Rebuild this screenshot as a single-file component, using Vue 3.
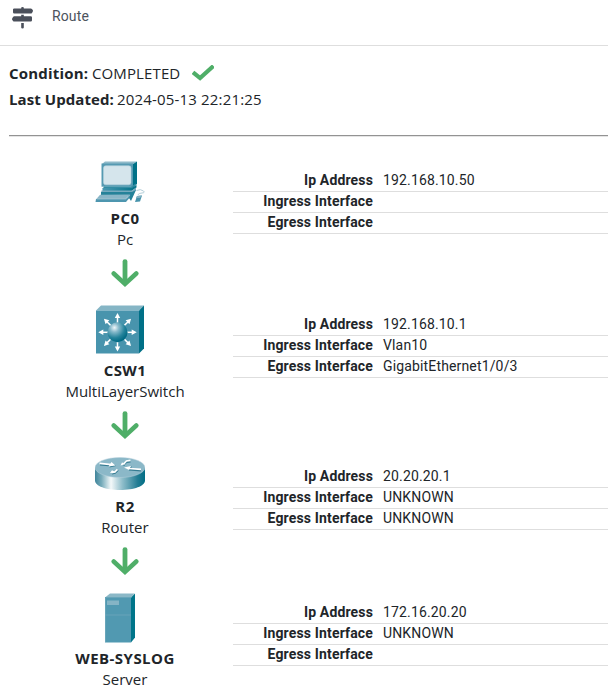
<script setup>
const hops = [
  { kind: 'pc', name: 'PC0', type: 'Pc', ip: '192.168.10.50', ingress: '', egress: '' },
  { kind: 'switch', name: 'CSW1', type: 'MultiLayerSwitch', ip: '192.168.10.1', ingress: 'Vlan10', egress: 'GigabitEthernet1/0/3' },
  { kind: 'router', name: 'R2', type: 'Router', ip: '20.20.20.1', ingress: 'UNKNOWN', egress: 'UNKNOWN' },
  { kind: 'server', name: 'WEB-SYSLOG', type: 'Server', ip: '172.16.20.20', ingress: 'UNKNOWN', egress: '' },
]
const angles = [0, 45, 90, 135, 180, 225, 270, 315]
</script>

<template>
  <main class="page">
    <header class="header">
      <svg class="sign" width="22" height="22" viewBox="0 0 22 22" fill="#4a4f5a">
        <path d="M9.200.8Q9.200 0 10.500 0t1.300.8v.6h6.900q.8 0 1.300.6l.8 1.200q.4.700 0 1.200L20 5.900q-.5.600-1.300.6H2.200Q1 6.500 1 5.300V2.600q0-1.200 1.200-1.200h7zM9.200 7.800h2.600v1.500h6.900q1.300 0 1.300 1.300v2.700q0 1.300-1.300 1.300H2.300q-.8 0-1.300-.6l-.8-1.200q-.4-.7 0-1.200L1 9.900q.5-.6 1.300-.6h6.900zM9.200 16h2.600v4.500q0 .9-1.300.9t-1.300-.9z" />
      </svg>
      <span class="title">Route</span>
    </header>
    <section class="summary">
      <div class="line">
        <b class="condition">Condition:</b><span class="status">COMPLETED</span>
        <svg class="check" width="22" height="17" viewBox="0 0 22 17"><path d="M2.600 8.600 8.100 13.100 19.900 2.400" fill="none" stroke="#4fae68" stroke-width="4.200" stroke-linecap="square" /></svg>
      </div>
      <div class="line"><b class="updated">Last Updated:</b><span class="date">2024-05-13 22:21:25</span></div>
    </section>
    <hr class="rule">
    <section class="route">
      <article v-for="(hop, i) in hops" :key="hop.name" class="hop">
        <div class="node">
          <svg v-if="hop.kind === 'pc'" class="device" width="50" height="42" viewBox="0 0 50 42">
            <defs><linearGradient id="pcSide"><stop stop-color="#4b98b1" /><stop offset="1" stop-color="#007187" /></linearGradient></defs>
            <path d="M7 3 10 .500h32L38 3z" fill="#8fbac9" />
            <path d="m38 3 4-2.500V23l-4.500 4z" fill="#007187" />
            <path d="M6.500 2.500H38v23.200H6.500z" fill="#569ab2" />
            <rect x="8.500" y="4.800" width="27.500" height="19" rx="2.200" fill="#d5e5ec" stroke="#b5d1dc" stroke-width=".6" />
            <path d="M9 25.500h27l5-3V24l-5 4H7.500z" fill="#338ca3" />
            <path d="M7.500 27h29l5-3v2.500l-5 3.500h-29z" fill="url(#pcSide)" />
            <path d="M6.500 29.500h30.500l4-3v3l-4 3H6z" fill="#77aabe" />
            <path d="M6 31h31l4-2-5 11-4-6H6z" fill="#258299" />
            <path d="m5 33.800 30-.300-5 5H1z" fill="#8ab6c7" />
            <path d="M1 38h29.500l5-4.500-1.500 4-3 3.500H.500z" fill="#4e96af" />
            <path d="M1.500 38h29L35 34" fill="none" stroke="#b4d0dc" stroke-width=".6" />
            <path d="M41.500 29.500q4-2 7 .500c3 3-5 1-5.500 4" fill="none" stroke="#b3ced9" />
            <path d="m42 35 5-.500-2 6-5 .500z" fill="#4793ab" /><path d="m42 35 5-.500-2 2.500h-4z" fill="#80afc1" />
          </svg>
          <svg v-else-if="hop.kind === 'switch'" class="device" width="50" height="50" viewBox="0 0 50 50">
            <defs><radialGradient id="ball" cx=".35" cy=".27" r=".72"><stop stop-color="#f0f7fa" /><stop offset=".3" stop-color="#88bacb" /><stop offset=".7" stop-color="#25839b" /><stop offset="1" stop-color="#006a84" /></radialGradient></defs>
            <path d="m1 5.500 5-5h43l-5 5z" fill="#85b5c5" /><path d="m44 5.500 5-5v43l-5 5z" fill="#007087" />
            <path d="M1 5.500h43v43H1z" fill="#4894ad" />
            <g v-for="angle in angles" :key="angle" :transform="`translate(22.500 27.300) rotate(${angle})`">
              <path d="M0-8v-8" stroke="#fff" stroke-width="1.500" /><path d="M-2.700-14.200 0-19.200l2.700 5z" fill="#fff" />
            </g>
            <circle cx="22.500" cy="27.300" r="10" fill="url(#ball)" />
          </svg>
          <svg v-else-if="hop.kind === 'router'" class="device" width="50" height="34" viewBox="0 0 50 34">
            <defs><linearGradient id="metal"><stop stop-color="#40859b" /><stop offset=".13" stop-color="#76abba" /><stop offset=".32" stop-color="#f4f9fa" /><stop offset=".55" stop-color="#8ebdca" /><stop offset=".85" stop-color="#247d94" /><stop offset="1" stop-color="#006e85" /></linearGradient></defs>
            <path d="M0 11v12.500C0 29 11 33 25 33s25-4 25-9.500V11z" fill="url(#metal)" />
            <ellipse cx="25" cy="10.500" rx="25" ry="10" fill="#8bb8c8" stroke="#b9d1dc" stroke-width=".5" />
            <g stroke="#357b91" stroke-width="1.800" fill="#357b91"><path d="m5 7.500 11.500 1M46 13.500 34 12.500M28.500 8.500l3-3.500 4-.5M23 13l-3 3-3 .5" fill="none" /><path d="m14.500 10.500 6.500-1.500-4-3.300zM31 11l6-1.500-2 4z" stroke="none" /></g>
            <g stroke="#fff" stroke-width="1.700" fill="#fff"><path d="m4.500 6.300 12 1.400M46 12.300 34 11.500M28.500 7l3-3 4-.7M22.500 12.300 20 14.800l-3 .8" fill="none" /><path d="m13.500 9.500 7-1-4-3.500zM29 10.500l7-1.500-2 4zM25.500 8.500l1.500-3 4 1.500zM15 16l2-2.800 4 2.300z" stroke="none" /></g>
          </svg>
          <svg v-else class="device" width="50" height="50" viewBox="0 0 50 50">
            <path d="m10 4.500 5-4h24.500l-3.500 4z" fill="#8bb8c7" /><path d="m36 4.500 4-4v44l-4 5z" fill="#00758a" />
            <path d="M10 4h26v45.500H10z" fill="#5199b1" /><path d="M12 7.500h12V12H12z" fill="#85b4c5" />
            <path d="M10.500 49V4.500H36M10 22h26" fill="none" stroke="#78acbf" stroke-width=".6" />
          </svg>
          <b class="name">{{ hop.name }}</b>
          <span class="type">{{ hop.type }}</span>
          <svg v-if="i < hops.length - 1" class="arrow" width="28" height="28" viewBox="0 0 28 28" fill="none" stroke="#4fae68" stroke-linecap="round">
            <path d="M14 2.600v20" stroke-width="4.800" /><path d="M2.700 14.500 14 24.900l11.300-10.400" stroke-width="4.500" />
          </svg>
        </div>
        <dl class="details">
          <div class="detail"><dt>Ip Address</dt><dd>{{ hop.ip }}</dd></div>
          <div class="detail"><dt>Ingress Interface</dt><dd>{{ hop.ingress }}</dd></div>
          <div class="detail"><dt>Egress Interface</dt><dd>{{ hop.egress }}</dd></div>
        </dl>
      </article>
    </section>
  </main>
</template>

<style>
body { margin: 0; background: #fff; overflow: hidden; }
</style>
<style scoped>
.page { height: 697px; overflow: hidden; color: #212529; font-family: "Open Sans", sans-serif; font-size: 15px; }
.header { box-sizing: border-box; height: 46px; display: flex; align-items: flex-start; padding: 7px 0 0 12px; border-bottom: 1px solid #dedede; }
.title { margin-left: 18px; font: 14px/18px Roboto, sans-serif; color: #4c535d; letter-spacing: .12px; }
.summary { padding: 14px 9px 0; }
.line { display: flex; align-items: center; height: 26px; white-space: nowrap; }
.condition { width: 83px; letter-spacing: .2px; }
.status { width: 100px; letter-spacing: .12px; }
.updated { width: 108px; letter-spacing: .07px; }
.date { letter-spacing: .17px; }
.rule { margin: 23px 0 0 9px; border: 0; border-top: 1px solid #939393; border-bottom: 1px solid #e5e5e5; }
.route { padding: 24px 0 0 17px; }
.hop { display: grid; grid-template-columns: 216px 1fr; }
.node { display: flex; flex-direction: column; align-items: center; }
.node > svg { display: block; flex: none; }
.device { margin-right: 10px; }
.name { margin-top: 5px; line-height: 21px; letter-spacing: .45px; white-space: nowrap; }
.type { line-height: 21px; white-space: nowrap; }
.arrow { margin: 9px 0 18px; }
.details { margin: 10px 0 0; font: 14px/18px Roboto, sans-serif; letter-spacing: .15px; }
.detail { height: 20px; display: grid; grid-template-columns: 140px 1fr; column-gap: 10px; border-bottom: 1px solid #dedede; }
dt { text-align: right; font-weight: 700; }
dd { margin: 0; }
</style>
